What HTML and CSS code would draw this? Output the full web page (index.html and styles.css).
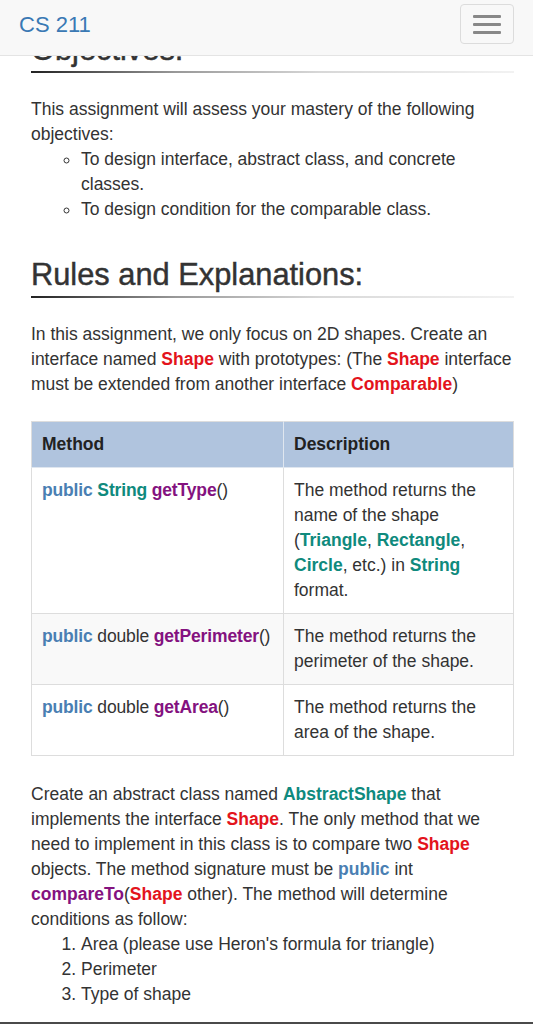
FILE: index.html
```html
<!DOCTYPE html>
<html lang="en">
<head>
<meta charset="utf-8">
<title>CS 211</title>
<link rel="stylesheet" href="styles.css">
</head>
<body>
<nav class="navbar">
  <a class="brand" href="#">CS 211</a>
  <button class="toggle" type="button" aria-label="Toggle navigation">
    <span class="bar"></span><span class="bar"></span><span class="bar"></span>
  </button>
</nav>
<main class="content">
  <h2 class="section-title">Objectives:</h2>
  <p class="text">This assignment will assess your mastery of the following objectives:</p>
  <ul class="circle-list">
    <li>To design interface, abstract class, and concrete classes.</li>
    <li>To design condition for the comparable class.</li>
  </ul>

  <h2 class="section-title title-gap">Rules and Explanations:</h2>
  <p class="text">In this assignment, we only focus on 2D shapes. Create an interface named <b class="red">Shape</b> with prototypes: (The <b class="red">Shape</b> interface must be extended from another interface <b class="red">Comparable</b>)</p>

  <table class="methods">
    <thead>
      <tr><th class="col-method">Method</th><th>Description</th></tr>
    </thead>
    <tbody>
      <tr>
        <td class="sig"><b class="kw">public</b> <b class="teal">String</b> <b class="fn">getType</b>()</td>
        <td>The method returns the name of the shape (<b class="teal">Triangle</b>, <b class="teal">Rectangle</b>, <b class="teal">Circle</b>, etc.) in <b class="teal">String</b> format.</td>
      </tr>
      <tr class="striped">
        <td class="sig"><b class="kw">public</b> double <b class="fn">getPerimeter</b>()</td>
        <td>The method returns the perimeter of the shape.</td>
      </tr>
      <tr>
        <td class="sig"><b class="kw">public</b> double <b class="fn">getArea</b>()</td>
        <td>The method returns the area of the shape.</td>
      </tr>
    </tbody>
  </table>

  <p class="text">Create an abstract class named <b class="teal">AbstractShape</b> that implements the interface <b class="red">Shape</b>. The only method that we need to implement in this class is to compare two <b class="red">Shape</b> objects. The method signature must be <b class="kw">public</b> int <b class="fn">compareTo</b>(<b class="red">Shape</b> other). The method will determine conditions as follow:</p>
  <ol class="num-list">
    <li>Area (please use Heron's formula for triangle)</li>
    <li>Perimeter</li>
    <li>Type of shape</li>
  </ol>
</main>
<div class="bottom-bar"></div>
</body>
</html>
```

FILE: styles.css
```css
* { box-sizing: border-box; }

html, body {
  margin: 0;
  padding: 0;
  background: #fff;
}

body {
  font-family: "Liberation Sans", Arial, Helvetica, sans-serif;
  font-size: 17.5px;
  line-height: 25px;
  color: #333;
}

.navbar {
  position: fixed;
  top: 0;
  left: 0;
  right: 0;
  height: 56px;
  background: #f8f8f8;
  border-bottom: 1px solid #e4e4e4;
  display: flex;
  align-items: flex-start;
  justify-content: space-between;
  padding: 0 19px 0 19px;
  z-index: 10;
}

.brand {
  color: #3a79b4;
  text-decoration: none;
  font-size: 22px;
  line-height: 50px;
}

.toggle {
  margin-top: 4px;
  width: 54px;
  height: 40px;
  background: transparent;
  border: 1px solid #dcdcdc;
  border-radius: 4px;
  display: flex;
  flex-direction: column;
  align-items: center;
  justify-content: center;
  gap: 5px;
  padding: 0;
}

.toggle .bar {
  display: block;
  width: 28px;
  height: 3px;
  border-radius: 1px;
  background: #888;
}

.content {
  padding: 32px 19px 0 31px;
}

.section-title {
  margin: 0;
  font-size: 30.8px;
  line-height: 36px;
  font-weight: normal;
  -webkit-text-stroke: 0.45px #333;
  color: #333;
  padding-bottom: 3px;
  position: relative;
}

.section-title::after {
  content: "";
  display: block;
  position: absolute;
  left: 0;
  right: 0;
  bottom: -2px;
  height: 2px;
  background: linear-gradient(to right, #222 0%, #999 30%, #d8d8d8 60%, #f2f2f2 100%);
}

.title-gap {
  margin-top: 35.5px;
}

.text {
  margin: 25.5px 0 0 0;
}

.circle-list {
  margin: 0;
  padding-left: 50px;
  list-style-type: circle;
}

.num-list {
  margin: 0;
  padding-left: 50px;
}

.red { color: #e3141c; }
.teal { color: #0f8a7d; }
.kw { color: #4a7fb3; }
.fn { color: #84127f; }

.methods {
  margin-top: 24.5px;
  width: 100%;
  border-collapse: collapse;
  border: 1px solid #ddd;
  table-layout: fixed;
}

.methods th,
.methods td {
  padding: 10px 10px;
  text-align: left;
  vertical-align: top;
  border: 1px solid #ddd;
}

.methods td.sig {
  white-space: nowrap;
  padding-right: 0;
  letter-spacing: -0.15px;
}

.methods th {
  background: #b0c4de;
  color: #222;
  font-weight: bold;
  border-color: #dfe6ef;
  border-top-color: #ddd;
}

.methods th:first-child { border-left-color: #ddd; }
.methods th:last-child { border-right-color: #ddd; }

.col-method { width: 252px; }

.methods .striped td { background: #f9f9f9; }

.bottom-bar {
  margin-top: 15.5px;
  height: 3px;
  background: #4a4a4a;
}
```
